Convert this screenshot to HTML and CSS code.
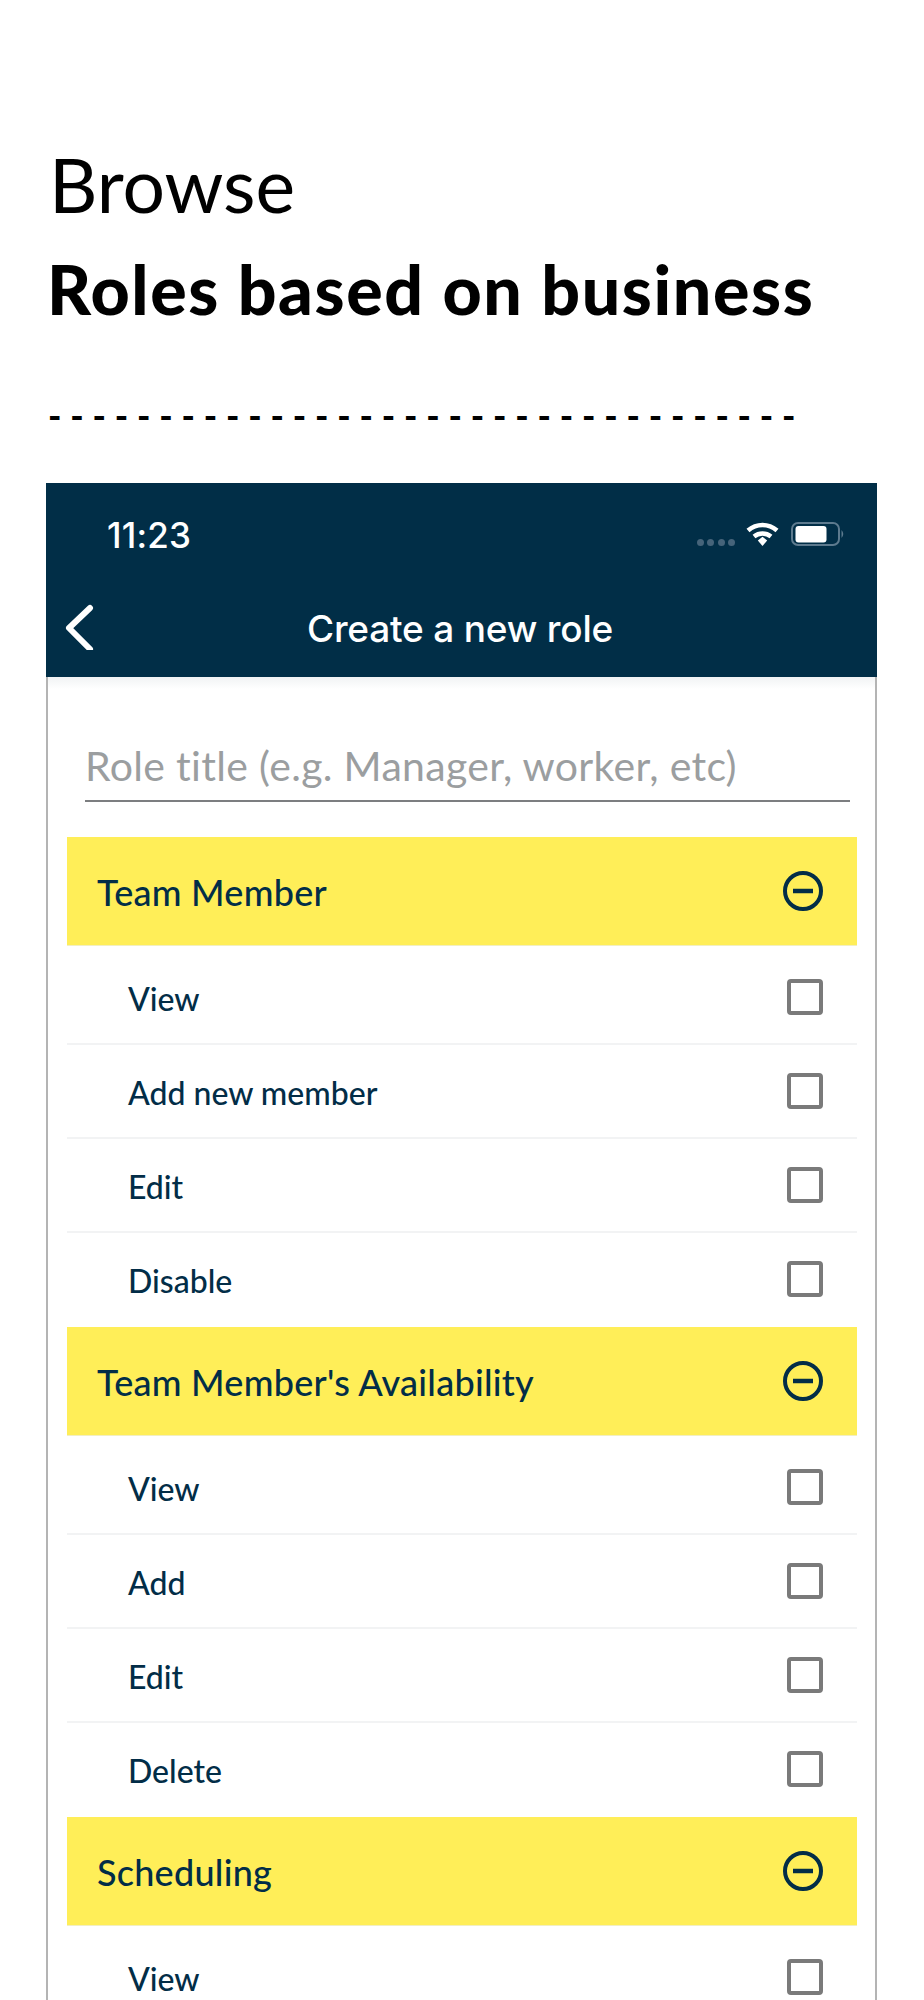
FILE: index.html
```html
<!DOCTYPE html>
<html lang="en">
<head>
<meta charset="utf-8">
<title>Browse roles</title>
<link rel="stylesheet" href="styles.css">
</head>
<body>
<main class="page">
  <header class="intro">
    <h1 class="intro-light">Browse</h1>
    <h2 class="intro-bold">Roles based on business</h2>
    <p class="dashes">----------------------------------</p>
  </header>
  <section class="phone">
    <div class="topbar">
      <div class="status">
        <span class="time">11:23</span>
        <div class="status-icons">
          <span class="dots"><i></i><i></i><i></i><i></i></span>
          <svg class="wifi" viewBox="0 0 33 24" aria-hidden="true"><path d="M2 8.5C10.500 1 22.500 1 31 8.500" /><path d="M8 14.500C13 10.500 20 10.500 25 14.500" /><path class="wifi-tip" d="M11.800 18.500 L16.500 14.800 L21.200 18.500 L16.500 24Z" /></svg>
          <svg class="battery" viewBox="0 0 54 24" aria-hidden="true"><rect class="battery-shell" x="1" y="1" width="47" height="22" rx="6" /><rect class="battery-fill" x="4.500" y="4" width="31" height="16.500" rx="3" /><path class="battery-nub" d="M50.500 8 Q54 12 50.500 16Z" /></svg>
        </div>
      </div>
      <nav class="navrow">
        <svg class="back" viewBox="0 0 30 48" aria-hidden="true"><path d="M26 6 L5 26 L26 47" /></svg>
        <span class="navtitle">Create a new role</span>
      </nav>
    </div>
    <div class="body">
      <div class="field">Role title (e.g. Manager, worker, etc)</div>

      <div class="group-head"><span>Team Member</span><svg class="minus" viewBox="0 0 40 40" aria-hidden="true"><circle cx="20" cy="20" r="18" /><path d="M10 20H30" /></svg></div>
      <ul class="perms">
        <li class="perm"><span>View</span><b class="check"></b></li>
        <li class="perm"><span>Add new member</span><b class="check"></b></li>
        <li class="perm"><span>Edit</span><b class="check"></b></li>
        <li class="perm perm-last"><span>Disable</span><b class="check"></b></li>
      </ul>

      <div class="group-head"><span>Team Member's Availability</span><svg class="minus" viewBox="0 0 40 40" aria-hidden="true"><circle cx="20" cy="20" r="18" /><path d="M10 20H30" /></svg></div>
      <ul class="perms">
        <li class="perm"><span>View</span><b class="check"></b></li>
        <li class="perm"><span>Add</span><b class="check"></b></li>
        <li class="perm"><span>Edit</span><b class="check"></b></li>
        <li class="perm perm-last"><span>Delete</span><b class="check"></b></li>
      </ul>

      <div class="group-head"><span>Scheduling</span><svg class="minus" viewBox="0 0 40 40" aria-hidden="true"><circle cx="20" cy="20" r="18" /><path d="M10 20H30" /></svg></div>
      <ul class="perms">
        <li class="perm"><span>View</span><b class="check"></b></li>
      </ul>
    </div>
  </section>
</main>
</body>
</html>
```
FILE: styles.css
```css
* { box-sizing: border-box; }
html, body { margin: 0; padding: 0; background: #fff; }
body { height: 2000px; overflow: hidden; font-family: "Lato", "Liberation Sans", sans-serif; }
.page { padding: 0 47px 0 46px; height: 2000px; overflow: hidden; }

.intro { padding: 142px 0 0 3px; height: 483px; color: #000; }
.intro-light { margin: 0; font-size: 75px; line-height: 84px; font-weight: 400; }
.intro-bold { margin: 25px 0 0 -2px; font-size: 68px; line-height: 76px; font-weight: 900; letter-spacing: 1.6px; white-space: nowrap; }
.dashes { margin: 68px 0 0 -1px; font-size: 36px; line-height: 40px; font-weight: 900; letter-spacing: 8.8px; white-space: nowrap; }

.phone { width: 831px; }
.topbar { background: #012e47; height: 194px; color: #fff; font-family: "Inter", "Roboto", sans-serif; }
.status { display: flex; justify-content: space-between; align-items: flex-start; height: 94px; padding: 32px 32px 0 62px; }
.time { font-size: 35px; line-height: 40px; font-weight: 500; letter-spacing: 0.2px; margin-left: -1px; }
.status-icons { display: flex; align-items: flex-start; padding-top: 7px; }
.dots { display: flex; gap: 3.500px; margin-top: 17px; margin-right: 11px; }
.dots i { width: 7px; height: 7px; border-radius: 50%; background: #46647a; }
.wifi { width: 33px; height: 24px; margin-right: 12px; }
.wifi path { fill: none; stroke: #fff; stroke-width: 4.500px; }
.wifi .wifi-tip { fill: #fff; stroke: none; }
.battery { width: 54px; height: 24px; }
.battery-shell { fill: none; stroke: #5d7a8e; stroke-width: 2; }
.battery-fill { fill: #fff; }
.battery-nub { fill: #5d7a8e; }

.navrow { display: flex; align-items: center; height: 100px; padding: 0 0 0 18px; }
.back { width: 30px; height: 48px; margin-top: -2px; flex: none; }
.back path { fill: none; stroke: #fff; stroke-width: 6px; stroke-linecap: round; stroke-linejoin: round; }
.navtitle { margin-left: 213px; font-size: 37px; line-height: 44px; font-weight: 500; white-space: nowrap; margin-top: 4px; letter-spacing: -0.2px; }

.body { border-left: 2px solid #b4b4b4; border-right: 2px solid #b4b4b4; padding: 0 18px 0 19px; height: 1323px; background: #fff; background-image: linear-gradient(#f1f3f4, #fff 12px); }
.field { margin: 0 7px 35px 18px; height: 125px; padding-top: 65px; border-bottom: 2px solid #7c7e80; color: #9b9ea0; font-size: 41px; line-height: 48px; letter-spacing: 0.33px; white-space: nowrap; }

.group-head { display: flex; justify-content: space-between; align-items: center; height: 109px; background: #ffee58; padding: 0 34px 0 30px; color: #022d47; font-size: 36px; line-height: 44px; font-weight: 500; letter-spacing: 0.25px; border-bottom: 1px solid #f2efc0; }
.group-head span { margin-top: 2px; }
.minus { width: 40px; height: 40px; flex: none; }
.minus circle { fill: none; stroke: #022d47; stroke-width: 4px; }
.minus path { stroke: #022d47; stroke-width: 4.500px; }

.perms { list-style: none; margin: 0; padding: 5px 0 0; }
.perm { display: flex; justify-content: space-between; align-items: center; height: 94px; padding: 0 34px 0 61px; color: #022d47; font-size: 32px; font-weight: 500; border-bottom: 2px solid #f2f3f4; }
.perm span { margin-top: 2px; }
.perm-last { border-bottom-color: transparent; }
.check { display: block; width: 36px; height: 36px; border: 4px solid #7a7a7a; border-radius: 4px; margin-top: -1px; flex: none; }
```
